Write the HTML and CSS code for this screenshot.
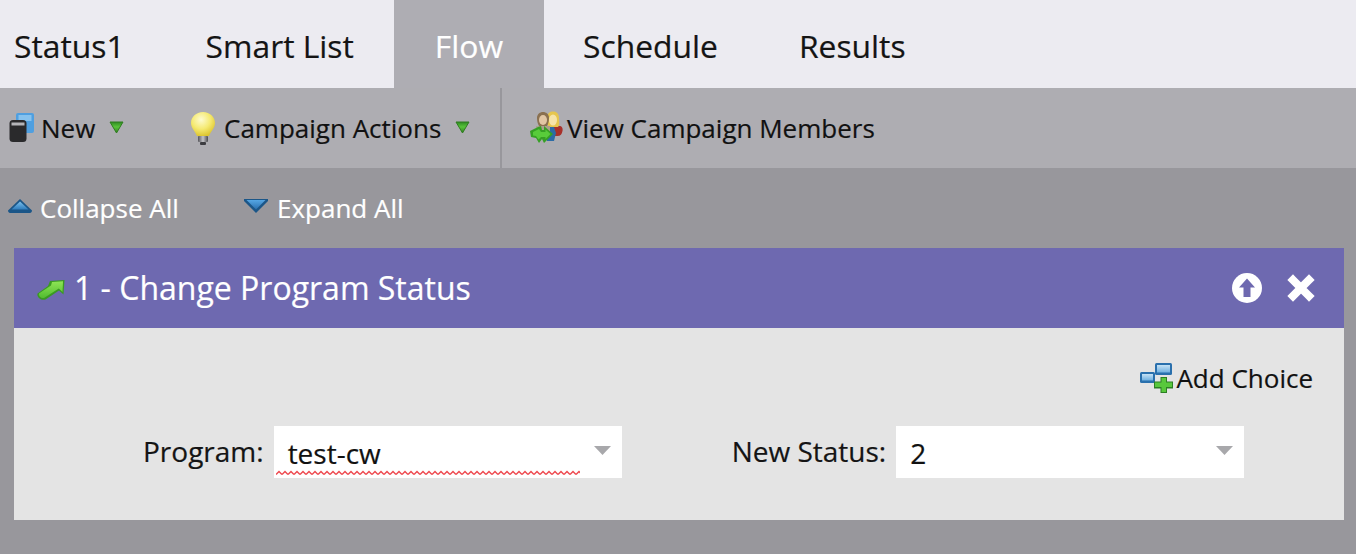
FILE: index.html
```html
<!DOCTYPE html>
<html lang="en">
<head>
<meta charset="utf-8">
<title>Flow</title>
<link rel="stylesheet" href="styles.css">
</head>
<body>
<svg class="defs" width="0" height="0" aria-hidden="true">
  <defs>
    <linearGradient id="g-caret" x1="0" y1="0" x2="0" y2="1"><stop offset="0" stop-color="#2f8a22"/><stop offset=".45" stop-color="#58c43a"/><stop offset="1" stop-color="#2f7d20"/></linearGradient>
    <radialGradient id="g-bulb" cx=".42" cy=".32" r=".7"><stop offset="0" stop-color="#fdfbd0"/><stop offset=".55" stop-color="#f5ea72"/><stop offset="1" stop-color="#dcc42e"/></radialGradient>
    <linearGradient id="g-screw" x1="0" y1="0" x2="1" y2="0"><stop offset="0" stop-color="#55555a"/><stop offset=".5" stop-color="#c4c4c8"/><stop offset="1" stop-color="#4a4a4e"/></linearGradient>
    <linearGradient id="g-arrow" x1="0" y1="0" x2="0" y2="1"><stop offset="0" stop-color="#8ee455"/><stop offset="1" stop-color="#52bc30"/></linearGradient>
    <linearGradient id="g-screen" x1="0" y1="0" x2="0" y2="1"><stop offset="0" stop-color="#c6e2f5"/><stop offset="1" stop-color="#6fb0e0"/></linearGradient>
    <linearGradient id="g-blue" x1="0" y1="0" x2="0" y2="1"><stop offset="0" stop-color="#7cc0ec"/><stop offset="1" stop-color="#2f7cbc"/></linearGradient>
    <linearGradient id="g-blue-d" x1="0" y1="0" x2="0" y2="1"><stop offset="0" stop-color="#55a6e4"/><stop offset="1" stop-color="#2a6fae"/></linearGradient>
  </defs>
</svg>
<nav class="tabs">
  <div class="tab tab-first">Status1</div>
  <div class="tab">Smart List</div>
  <div class="tab tab-active">Flow</div>
  <div class="tab tab-schedule">Schedule</div>
  <div class="tab">Results</div>
</nav>
<div class="toolbar">
  <div class="tool tool-new">
    <svg width="26" height="34" viewBox="0 0 26 34"><rect x="8" y="2" width="18" height="20" rx="2" fill="#4f9fe0"/><rect x="10.500" y="4" width="13" height="6" fill="#86c2ee"/><rect x="1.500" y="9" width="17" height="22" rx="3.500" fill="#2a2a2c"/><rect x="3.500" y="11.500" width="13" height="3" fill="#b4b4b8"/></svg>
    <span>New</span>
    <svg class="caret" width="15" height="13" viewBox="0 0 15 13"><path d="M1 1H14L7.500 12Z" fill="url(#g-caret)" stroke="#2f7d20" stroke-linejoin="round"/></svg>
  </div>
  <div class="tool tool-campaign">
    <svg width="28" height="34" viewBox="0 0 28 34"><path d="M14 1C7 1 2 6 2 12c0 5 4 8 6 13h12c2-5 6-8 6-13 0-6-5-11-12-11Z" fill="url(#g-bulb)"/><rect x="9" y="25" width="10" height="6" rx="1" fill="url(#g-screw)"/><rect x="11" y="31" width="6" height="3" rx="1" fill="#3c3c40"/></svg>
    <span>Campaign Actions</span>
    <svg class="caret" width="15" height="13" viewBox="0 0 15 13"><path d="M1 1H14L7.500 12Z" fill="url(#g-caret)" stroke="#2f7d20" stroke-linejoin="round"/></svg>
  </div>
  <div class="tool tool-members">
    <svg width="34" height="34" viewBox="0 0 34 34"><path d="M23 15h6c3 0 4 2 3.500 5-.5 3-2 5-5 5H23Z" fill="#a8302a"/><path d="M17 16h7l2 6-2 8h-7Z" fill="#2c6ca6"/><path d="M17 7c0-5 3-6.500 6-6.500s6 1.500 6 6.500c0 4 1 7-1 9H19c-2-2-2-5-2-9Z" fill="#e6c64e"/><ellipse cx="23" cy="9" rx="4" ry="5.500" fill="#f6e4a8"/><path d="M7 7c0-4 3-6 6-6s6 2 6 6-1 6-2 8H9C8 13 7 11 7 7Z" fill="#8a7050"/><ellipse cx="13" cy="9" rx="4" ry="5" fill="#e2c6a4"/><path d="M6 15h14v10H6Z" fill="#a9a08c"/><path d="M0 20 8 16 11 15 12 19H14V15L23 23 14 32 12 28 9 32 6 27 1 26Z" fill="#36a024"/><path d="M3 21 9 18 11 21H15.500V18.500L20.500 23 15.500 28V26H11L8.500 28.500 6 25 3 24.500Z" fill="#58cc3a"/></svg>
    <span>View Campaign Members</span>
  </div>
</div>
<main class="content">
  <div class="expanders">
    <div class="expander expander-collapse">
      <svg width="26" height="16" viewBox="0 0 26 16"><path d="M13 1 25 12.500c0 1.500-1 2.500-2 2.500H3c-1 0-2-1-2-2.500Z" fill="#1b5688"/><path d="M13 3.500 21.500 11.500H4.500Z" fill="url(#g-blue)"/></svg>
      <span>Collapse All</span>
    </div>
    <div class="expander expander-expand">
      <svg width="26" height="16" viewBox="0 0 26 16"><path d="M1 1H25V3L13 15 1 3Z" fill="#1b5688"/><path d="M3.500 2H22.500L13 11.500Z" fill="url(#g-blue-d)"/></svg>
      <span>Expand All</span>
    </div>
  </div>
  <section class="panel">
    <header class="panel-head">
      <svg class="flow-ico" width="29" height="24" viewBox="0 0 29 24"><path d="M14 5 28.500 4 27.500 18.500 23 14.500 9.500 23.500C5.500 25 .5 21.500 1.500 17.500L12 10Z" fill="#3a9a22"/><path d="M16 6 27 5.300 26.500 16 22.800 12.500 8 22C5 22.500 2.500 20 3 17.500L15 9.500Z" fill="url(#g-arrow)"/></svg>
      <h1 class="panel-title">1 - Change Program Status</h1>
      <div class="panel-actions">
        <svg width="32" height="32" viewBox="0 0 32 32"><circle cx="16" cy="16" r="15" fill="#fff"/><path d="M16 6.500 24 15.500H19.500V25H12.500V15.500H8Z" fill="#6e69b0"/></svg>
        <svg width="30" height="30" viewBox="0 0 30 30"><path d="M7 7 23 23M23 7 7 23" stroke="#fff" stroke-width="8" stroke-linecap="square"/></svg>
      </div>
    </header>
    <div class="panel-body">
      <div class="add-row">
        <svg width="33" height="30" viewBox="0 0 33 30"><rect x="0" y="9" width="15" height="11" rx="1.500" fill="#2a70ad"/><rect x="2" y="11" width="11" height="6.500" fill="url(#g-screen)"/><rect x="15" y="0" width="17" height="12" rx="1.500" fill="#2a70ad"/><rect x="17" y="2" width="13" height="7.500" fill="url(#g-screen)"/><path d="M14 18.500h6.500V14h6.500v4.500h6v7h-6V30h-6.500v-4.500H14Z" fill="#2c7f24"/><path d="M21.500 15h4.500v4.500h6v4.500h-6v5h-4.500v-5H15v-4.500h6.500Z" fill="#58c83c"/></svg>
        <span>Add Choice</span>
      </div>
      <div class="form-row">
        <label class="field-label field-label-program">Program:</label>
        <div class="select">
          <span class="select-value">test-cw</span>
          <svg class="select-caret" width="17" height="9" viewBox="0 0 17 9"><path d="M0 0H17L8.500 9Z" fill="#a8a8ab"/></svg>
          <svg class="squiggle" width="304" height="6" viewBox="0 0 304 6"><defs><pattern id="sq" width="6" height="6" patternUnits="userSpaceOnUse"><path d="M0 4.500 3 1.500 6 4.500" fill="none" stroke="#ee4a50" stroke-width="1.500"/></pattern></defs><rect width="304" height="6" fill="url(#sq)"/></svg>
        </div>
        <label class="field-label field-label-status">New Status:</label>
        <div class="select">
          <span class="select-value">2</span>
          <svg class="select-caret" width="17" height="9" viewBox="0 0 17 9"><path d="M0 0H17L8.500 9Z" fill="#a8a8ab"/></svg>
        </div>
      </div>
    </div>
  </section>
</main>
</body>
</html>
```
FILE: styles.css
```css
* { box-sizing: border-box; }
html, body { margin: 0; height: 100%; overflow: hidden; }
body {
  font-family: "Open Sans", "Noto Sans", sans-serif;
  background: #98979c;
  color: #111;
  -webkit-text-stroke: 0.2px currentColor;
}
svg { display: block; flex: none; }
.defs { position: absolute; }

.tabs { display: flex; height: 88px; background: #ecebf1; font-size: 31.8px; }
.tab { display: flex; align-items: center; padding: 2px 40px 0; color: #141414; }
.tab-first { padding: 2px 41px 0 14px; }
.tab-active { padding: 2px 41px 0 41px; background: #aeadb3; color: #fff; }
.tab-schedule { padding: 2px 41px 0 39px; }

.toolbar { display: flex; align-items: center; height: 80px; background: #aeadb2; font-size: 26px; }
.tool { display: flex; align-items: center; height: 100%; }
.tool-new { padding-left: 8px; width: 189px; }
.tool-new span { margin-left: 7px; }
.tool-new .caret { margin-left: 14px; }
.tool-campaign { width: 313px; border-right: 2px solid #98979c; }
.tool-campaign span { margin-left: 7px; }
.tool-campaign .caret { margin-left: 14px; }
.tool-members { margin-left: 28px; }
.tool-members span { margin-left: 3px; }
.caret { margin-top: -2px; }

.content { padding: 0 12px 0 14px; }
.expanders { display: flex; align-items: center; height: 80px; margin-left: -7px; color: #fff; font-size: 26px; }
.expander { display: flex; align-items: center; gap: 7px; }
.expander svg { margin-top: -4px; }
.expander-collapse { width: 236px; }
.expander-expand { gap: 8px; }

.panel { background: #e4e4e4; height: 272px; }
.panel-head { display: flex; align-items: center; height: 80px; background: #6e69b0; color: #fff; padding: 0 28px 0 22px; }
.flow-ico { margin-right: 9px; }
.panel-title { margin: 0 0 2px; font-size: 32px; font-weight: 400; flex: 1; -webkit-text-stroke: 0.2px currentColor; }
.panel-actions { display: flex; align-items: center; gap: 23px; }

.panel-body { padding-top: 33px; }
.add-row { display: flex; justify-content: flex-end; align-items: center; gap: 3px; padding-right: 31px; height: 34px; font-size: 26px; }

.form-row { display: flex; align-items: center; margin-top: 31px; font-size: 28px; }
.field-label { color: #141414; margin-top: -2px; }
.field-label-program { margin-left: 129px; }
.field-label-status { margin-left: 110px; }
.select { position: relative; height: 52px; width: 348px; margin-left: 10px; padding-left: 14px; background: #fff; display: flex; align-items: center; }
.select-value { color: #111; margin-top: 1px; }
.select-caret { position: absolute; right: 11px; top: 20px; }
.squiggle { position: absolute; left: 2px; bottom: 2px; }
```
